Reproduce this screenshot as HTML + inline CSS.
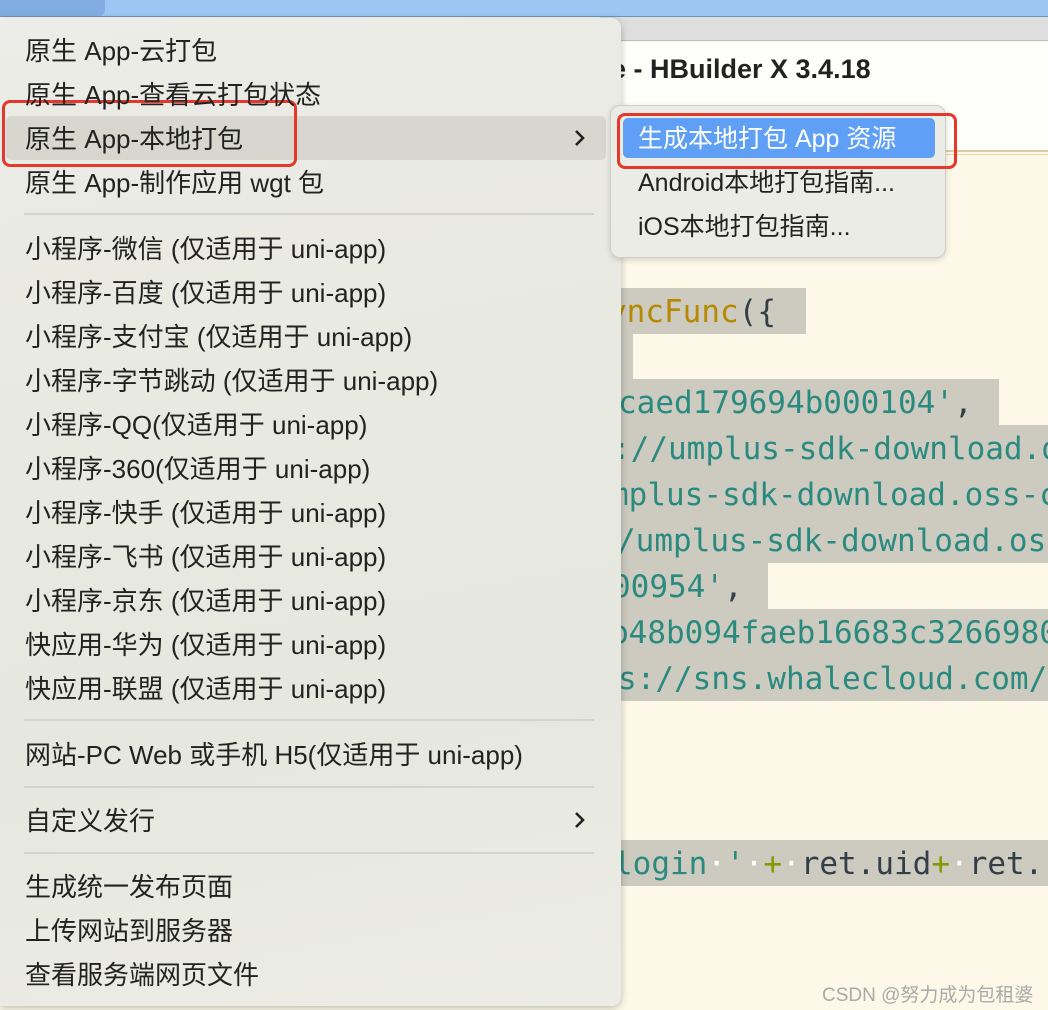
<!DOCTYPE html>
<html><head><meta charset="utf-8"><style>
*{margin:0;padding:0;box-sizing:border-box}
body{width:1048px;height:1010px;overflow:hidden;position:relative;background:#fdf8e8;font-family:"Liberation Sans","Noto Sans CJK SC",sans-serif}
.a{position:absolute}
.code{font-family:"DejaVu Sans Mono","Liberation Mono",monospace;font-size:31px;color:#2a8a80;white-space:pre;line-height:48px;height:46px;overflow:hidden}
.hl{background:#cdcbbf}
.mi{position:absolute;left:25px;font-size:26px;color:#222;line-height:46px;height:44px;white-space:nowrap}
.sep{position:absolute;left:24px;width:570px;height:2px;background:#d4d4cd}
.si{position:absolute;left:638px;font-size:25px;color:#222;line-height:42px;white-space:nowrap}
.arr{position:absolute;left:572px;width:14px;height:20px}
</style></head><body>
<div class="a" style="left:0;top:0;width:1048px;height:17px;background:#9cc6f3;border-bottom:1px solid #6f93bf"></div>
<div class="a" style="left:0;top:0;width:105px;height:16px;background:#82ade3;border-radius:0 0 6px 0"></div>
<div class="a" style="left:600px;top:17px;width:448px;height:24px;background:#dedede;border-bottom:1px solid #bdbdbd"></div>
<div class="a" style="left:600px;top:42px;width:448px;height:108px;background:#fefefa"></div>
<div class="a" style="left:600px;top:150px;width:448px;height:2px;background:#dccca0"></div>
<div class="a" style="left:600px;top:154px;width:448px;height:1px;background:#e5d8b5"></div>
<div class="a" style="left:611px;top:54px;font-size:27px;font-weight:bold;color:#222;white-space:nowrap">e - HBuilder X 3.4.18</div>

<div class="a code hl" style="left:608px;top:288px;width:198px"><span style="color:#b58900">yncFunc</span><span style="color:#333e48">({</span></div>
<div class="a hl" style="left:600px;top:334px;width:33px;height:46px"></div>
<div class="a code hl" style="left:618px;top:379px;width:381px">caed179694b000104'<span style="color:#333e48">,</span></div>
<div class="a code hl" style="left:612px;top:425px;width:436px">://umplus-sdk-download.oss</div>
<div class="a code hl" style="left:610px;top:471px;width:438px">mplus-sdk-download.oss-cn</div>
<div class="a code hl" style="left:617px;top:517px;width:431px">/umplus-sdk-download.oss-c</div>
<div class="a code hl" style="left:612px;top:563px;width:156px">00954'<span style="color:#333e48">,</span></div>
<div class="a code hl" style="left:610px;top:609px;width:438px">b48b094faeb16683c3266980</div>
<div class="a code hl" style="left:618px;top:655px;width:430px">s://sns.whalecloud.com/</div>
<div class="a code hl" style="left:614px;top:840px;width:434px">login<span style="color:#fff">·</span>'<span style="color:#fff">·</span><span style="color:#859900">+</span><span style="color:#fff">·</span><span style="color:#333e48">ret.uid</span><span style="color:#859900">+</span><span style="color:#fff">·</span><span style="color:#333e48">ret.</span></div>
<div class="a" style="left:822px;top:980px;font-size:19px;color:#aaa;white-space:nowrap">CSDN @努力成为包租婆</div>

<div class="a" style="left:0;top:18px;width:621px;height:988px;background:linear-gradient(170deg,#ecece8,#e8e9e0 40%,#e6e8df 70%,#ecece6);border-radius:0 10px 10px 0;box-shadow:0 2px 8px rgba(0,0,0,.25)"></div>
<div class="a" style="left:6px;top:116px;width:600px;height:44px;background:#d7d7cf;border-radius:5px"></div>
<div class="a" style="left:2px;top:100px;width:295px;height:67px;border:3px solid #e5372c;border-radius:8px"></div>
<div class="mi" style="top:28px">原生 App-云打包</div>
<div class="mi" style="top:72px">原生 App-查看云打包状态</div>
<div class="mi" style="top:116px">原生 App-本地打包</div>
<div class="mi" style="top:160px">原生 App-制作应用 wgt 包</div>
<svg class="arr" style="top:128px" viewBox="0 0 14 20"><path d="M4 3 L11 10 L4 17" fill="none" stroke="#222" stroke-width="2.6"/></svg>
<div class="sep" style="top:213px"></div>
<div class="mi" style="top:226px">小程序-微信 (仅适用于 uni-app)</div>
<div class="mi" style="top:270px">小程序-百度 (仅适用于 uni-app)</div>
<div class="mi" style="top:314px">小程序-支付宝 (仅适用于 uni-app)</div>
<div class="mi" style="top:358px">小程序-字节跳动 (仅适用于 uni-app)</div>
<div class="mi" style="top:402px">小程序-QQ(仅适用于 uni-app)</div>
<div class="mi" style="top:446px">小程序-360(仅适用于 uni-app)</div>
<div class="mi" style="top:490px">小程序-快手 (仅适用于 uni-app)</div>
<div class="mi" style="top:534px">小程序-飞书 (仅适用于 uni-app)</div>
<div class="mi" style="top:578px">小程序-京东 (仅适用于 uni-app)</div>
<div class="mi" style="top:622px">快应用-华为 (仅适用于 uni-app)</div>
<div class="mi" style="top:666px">快应用-联盟 (仅适用于 uni-app)</div>
<div class="sep" style="top:719px"></div>
<div class="mi" style="top:732px">网站-PC Web 或手机 H5(仅适用于 uni-app)</div>
<div class="sep" style="top:786px"></div>
<div class="mi" style="top:798px">自定义发行</div>
<svg class="arr" style="top:810px" viewBox="0 0 14 20"><path d="M4 3 L11 10 L4 17" fill="none" stroke="#222" stroke-width="2.6"/></svg>
<div class="sep" style="top:852px"></div>
<div class="mi" style="top:864px">生成统一发布页面</div>
<div class="mi" style="top:908px">上传网站到服务器</div>
<div class="mi" style="top:952px">查看服务端网页文件</div>

<div class="a" style="left:610px;top:105px;width:336px;height:153px;background:#ebece6;border:1px solid #cfcfc9;border-radius:10px;box-shadow:0 2px 6px rgba(0,0,0,.15)"></div>
<div class="a" style="left:623px;top:118px;width:312px;height:40px;background:#5f9ff6;border-radius:5px"></div>
<div class="a" style="left:617px;top:113px;width:340px;height:56px;border:3px solid #e5372c;border-radius:8px"></div>
<div class="si" style="top:118px;color:#fff">生成本地打包 App 资源</div>
<div class="si" style="top:162px">Android本地打包指南...</div>
<div class="si" style="top:206px">iOS本地打包指南...</div>
</body></html>
